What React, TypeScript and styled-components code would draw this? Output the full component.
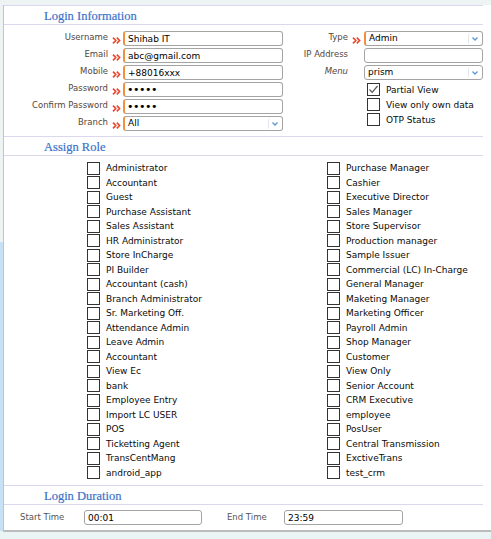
import React from 'react';
import styled, { createGlobalStyle, css } from 'styled-components';

const Global = createGlobalStyle`
  html, body { margin: 0; padding: 0; }
  body {
    font-family: "DejaVu Sans", Verdana, sans-serif;
    background: #eaf3f3;
  }
`;

const Page = styled.div`
  width: 491px;
  height: 539px;
  box-sizing: border-box;
  padding: 5px 0 0 3px;
  overflow: hidden;
  background: linear-gradient(
    to bottom,
    #eef4f4 0px,
    #eef4f4 242px,
    #c6e1f4 242px,
    #c6e1f4 531px,
    #eaf4f4 531px
  );
`;

const Panel = styled.div`
  background: #fff;
  border-left: 1px solid #c4c4c4;
  border-bottom: 2px solid #bcbcbc;
`;

const Section = styled.section`
  margin-right: 8px;
  border-top: 1px solid #dbd7ed;
`;

const Heading = styled.h2`
  margin: 0;
  height: 18px;
  line-height: 20px;
  padding-left: 40px;
  border-bottom: 1px solid #dbd7ed;
  font-family: "Liberation Serif", "Times New Roman", serif;
  font-weight: normal;
  font-size: 12.5px;
  color: #3a72c8;
  -webkit-text-stroke: 0.2px #3a72c8;
  overflow: hidden;
`;

const InfoBody = styled.div`
  height: 111px;
  box-sizing: border-box;
  padding-top: 5px;
  display: flex;
`;

const FieldGrid = styled.div<{ $cols: string }>`
  display: grid;
  grid-template-columns: ${(p) => p.$cols};
  grid-auto-rows: 17px;
  align-items: center;
`;

const Label = styled.label<{ $italic?: boolean }>`
  text-align: right;
  font-size: 8.5px;
  color: #54473c;
  margin-bottom: 3px;
  white-space: nowrap;
  ${(p) => p.$italic && css`font-style: italic;`}
`;

const ArrowCell = styled.span`
  display: flex;
  justify-content: center;
  padding-top: 4px;
  padding-left: 1px;
`;

const fieldBox = css<{ $req?: boolean }>`
  height: 15px;
  box-sizing: border-box;
  border: 1px solid #a4a4a4;
  border-radius: 3px;
  background: #fff;
  font-family: "DejaVu Sans", Verdana, sans-serif;
  font-size: 9px;
  color: #000;
  ${(p) =>
    p.$req &&
    css`
      border-left: 2px solid #f0913f;
    `}
`;

const TextInput = styled.input<{ $req?: boolean; $w?: number }>`
  ${fieldBox};
  width: ${(p) => (p.$w ? `${p.$w}px` : '100%')};
  min-width: 0;
  padding: 0 3px;
  margin: 0;
  outline: none;
  &[type='password'] {
    font-size: 11px;
    letter-spacing: -0.5px;
    padding-left: 2px;
  }
`;

const SelectBox = styled.div<{ $req?: boolean }>`
  ${fieldBox};
  width: 100%;
  display: flex;
  align-items: center;
  padding-left: 3px;
  line-height: 13px;
`;

const SelectText = styled.span`
  flex: 1;
`;

const Chevron = styled.span`
  width: 12px;
  height: 11px;
  margin-right: 1px;
  border-left: 1px solid #e4e8ee;
  border-radius: 2px;
  display: flex;
  align-items: center;
  justify-content: center;
`;

const CheckList = styled.div`
  margin: 1px 0 0 84px;
  display: grid;
  grid-auto-rows: 15px;
  align-items: center;
`;

const CheckRow = styled.label`
  display: flex;
  align-items: center;
  gap: 6px;
  font-size: 9px;
  color: #0a0a0a;
  white-space: nowrap;
`;

const Box = styled.span`
  width: 13px;
  height: 13px;
  box-sizing: border-box;
  border: 1px solid #333;
  background: #fff;
  display: flex;
  align-items: center;
  justify-content: center;
  flex: none;
`;

const RoleBody = styled.div`
  height: 329px;
  box-sizing: border-box;
  padding: 5px 0 0 83px;
  display: grid;
  grid-template-columns: 240px minmax(0, 1fr);
  grid-auto-rows: 14.5px;
  align-items: center;
`;

const DurationBody = styled.div`
  height: 25px;
  display: flex;
  align-items: center;
  padding-left: 16px;
`;

const DurLabel = styled.label<{ $w: number; $ml?: number }>`
  width: ${(p) => p.$w}px;
  margin-left: ${(p) => p.$ml ?? 0}px;
  font-size: 8.5px;
  color: #555;
  margin-bottom: 2px;
`;

const Arrow = () => (
  <ArrowCell>
    <svg width="9" height="7" viewBox="0 0 9 7">
      <path d="M1 0.6 L3.8 3.5 L1 6.4 M4.8 0.6 L7.6 3.5 L4.8 6.4" fill="none" stroke="#e8472e" strokeWidth="1.6" />
    </svg>
  </ArrowCell>
);

const Select = ({ value, req }: { value: string; req?: boolean }) => (
  <SelectBox $req={req}>
    <SelectText>{value}</SelectText>
    <Chevron>
      <svg width="6" height="4" viewBox="0 0 6 4">
        <path d="M0.5 0.5 L3 3 L5.5 0.5" fill="none" stroke="#5c97d4" strokeWidth="1.3" />
      </svg>
    </Chevron>
  </SelectBox>
);

const Check = ({ label, checked }: { label: string; checked?: boolean }) => (
  <CheckRow>
    <Box>
      {checked && (
        <svg width="11" height="11" viewBox="0 0 11 11">
          <path d="M1.5 5.5 L4.2 8.3 L9.5 2" fill="none" stroke="#555" strokeWidth="1.2" />
        </svg>
      )}
    </Box>
    {label}
  </CheckRow>
);

const left = [
  'Administrator', 'Accountant', 'Guest', 'Purchase Assistant', 'Sales Assistant', 'HR Administrator',
  'Store InCharge', 'PI Builder', 'Accountant (cash)', 'Branch Administrator', 'Sr. Marketing Off.',
  'Attendance Admin', 'Leave Admin', 'Accountant', 'View Ec', 'bank', 'Employee Entry', 'Import LC USER',
  'POS', 'Ticketting Agent', 'TransCentMang', 'android_app',
];
const right = [
  'Purchase Manager', 'Cashier', 'Executive Director', 'Sales Manager', 'Store Supervisor',
  'Production manager', 'Sample Issuer', 'Commercial (LC) In-Charge', 'General Manager', 'Maketing Manager',
  'Marketing Officer', 'Payroll Admin', 'Shop Manager', 'Customer', 'View Only', 'Senior Account',
  'CRM Executive', 'employee', 'PosUser', 'Central Transmission', 'ExctiveTrans', 'test_crm',
];

export default function App() {
  return (
    <>
      <Global />
      <Page>
        <Panel>
          <Section>
            <Heading>Login Information</Heading>
            <InfoBody>
              <FieldGrid $cols="104px 15px 160px">
                <Label>Username</Label><Arrow /><TextInput $req defaultValue="Shihab IT" />
                <Label>Email</Label><Arrow /><TextInput $req defaultValue="abc@gmail.com" />
                <Label>Mobile</Label><Arrow /><TextInput $req defaultValue="+88016xxx" />
                <Label>Password</Label><Arrow /><TextInput $req type="password" defaultValue="12345" />
                <Label>Confirm Password</Label><Arrow /><TextInput $req type="password" defaultValue="12345" />
                <Label>Branch</Label><Arrow /><Select req value="All" />
              </FieldGrid>
              <div>
                <FieldGrid $cols="65px 16px 119px">
                  <Label>Type</Label><Arrow /><Select req value="Admin" />
                  <Label>IP Address</Label><span /><TextInput defaultValue="" />
                  <Label $italic>Menu</Label><span /><Select value="prism" />
                </FieldGrid>
                <CheckList>
                  <Check label="Partial View" checked />
                  <Check label="View only own data" />
                  <Check label="OTP Status" />
                </CheckList>
              </div>
            </InfoBody>
          </Section>
          <Section>
            <Heading>Assign Role</Heading>
            <RoleBody>
              {left.map((l, i) => (
                <React.Fragment key={i}>
                  <Check label={l} />
                  <Check label={right[i]} />
                </React.Fragment>
              ))}
            </RoleBody>
          </Section>
          <Section>
            <Heading>Login Duration</Heading>
            <DurationBody>
              <DurLabel $w={64}>Start Time</DurLabel>
              <TextInput $w={118} defaultValue="00:01" />
              <DurLabel $w={57} $ml={25}>End Time</DurLabel>
              <TextInput $w={119} defaultValue="23:59" />
            </DurationBody>
          </Section>
        </Panel>
      </Page>
    </>
  );
}
